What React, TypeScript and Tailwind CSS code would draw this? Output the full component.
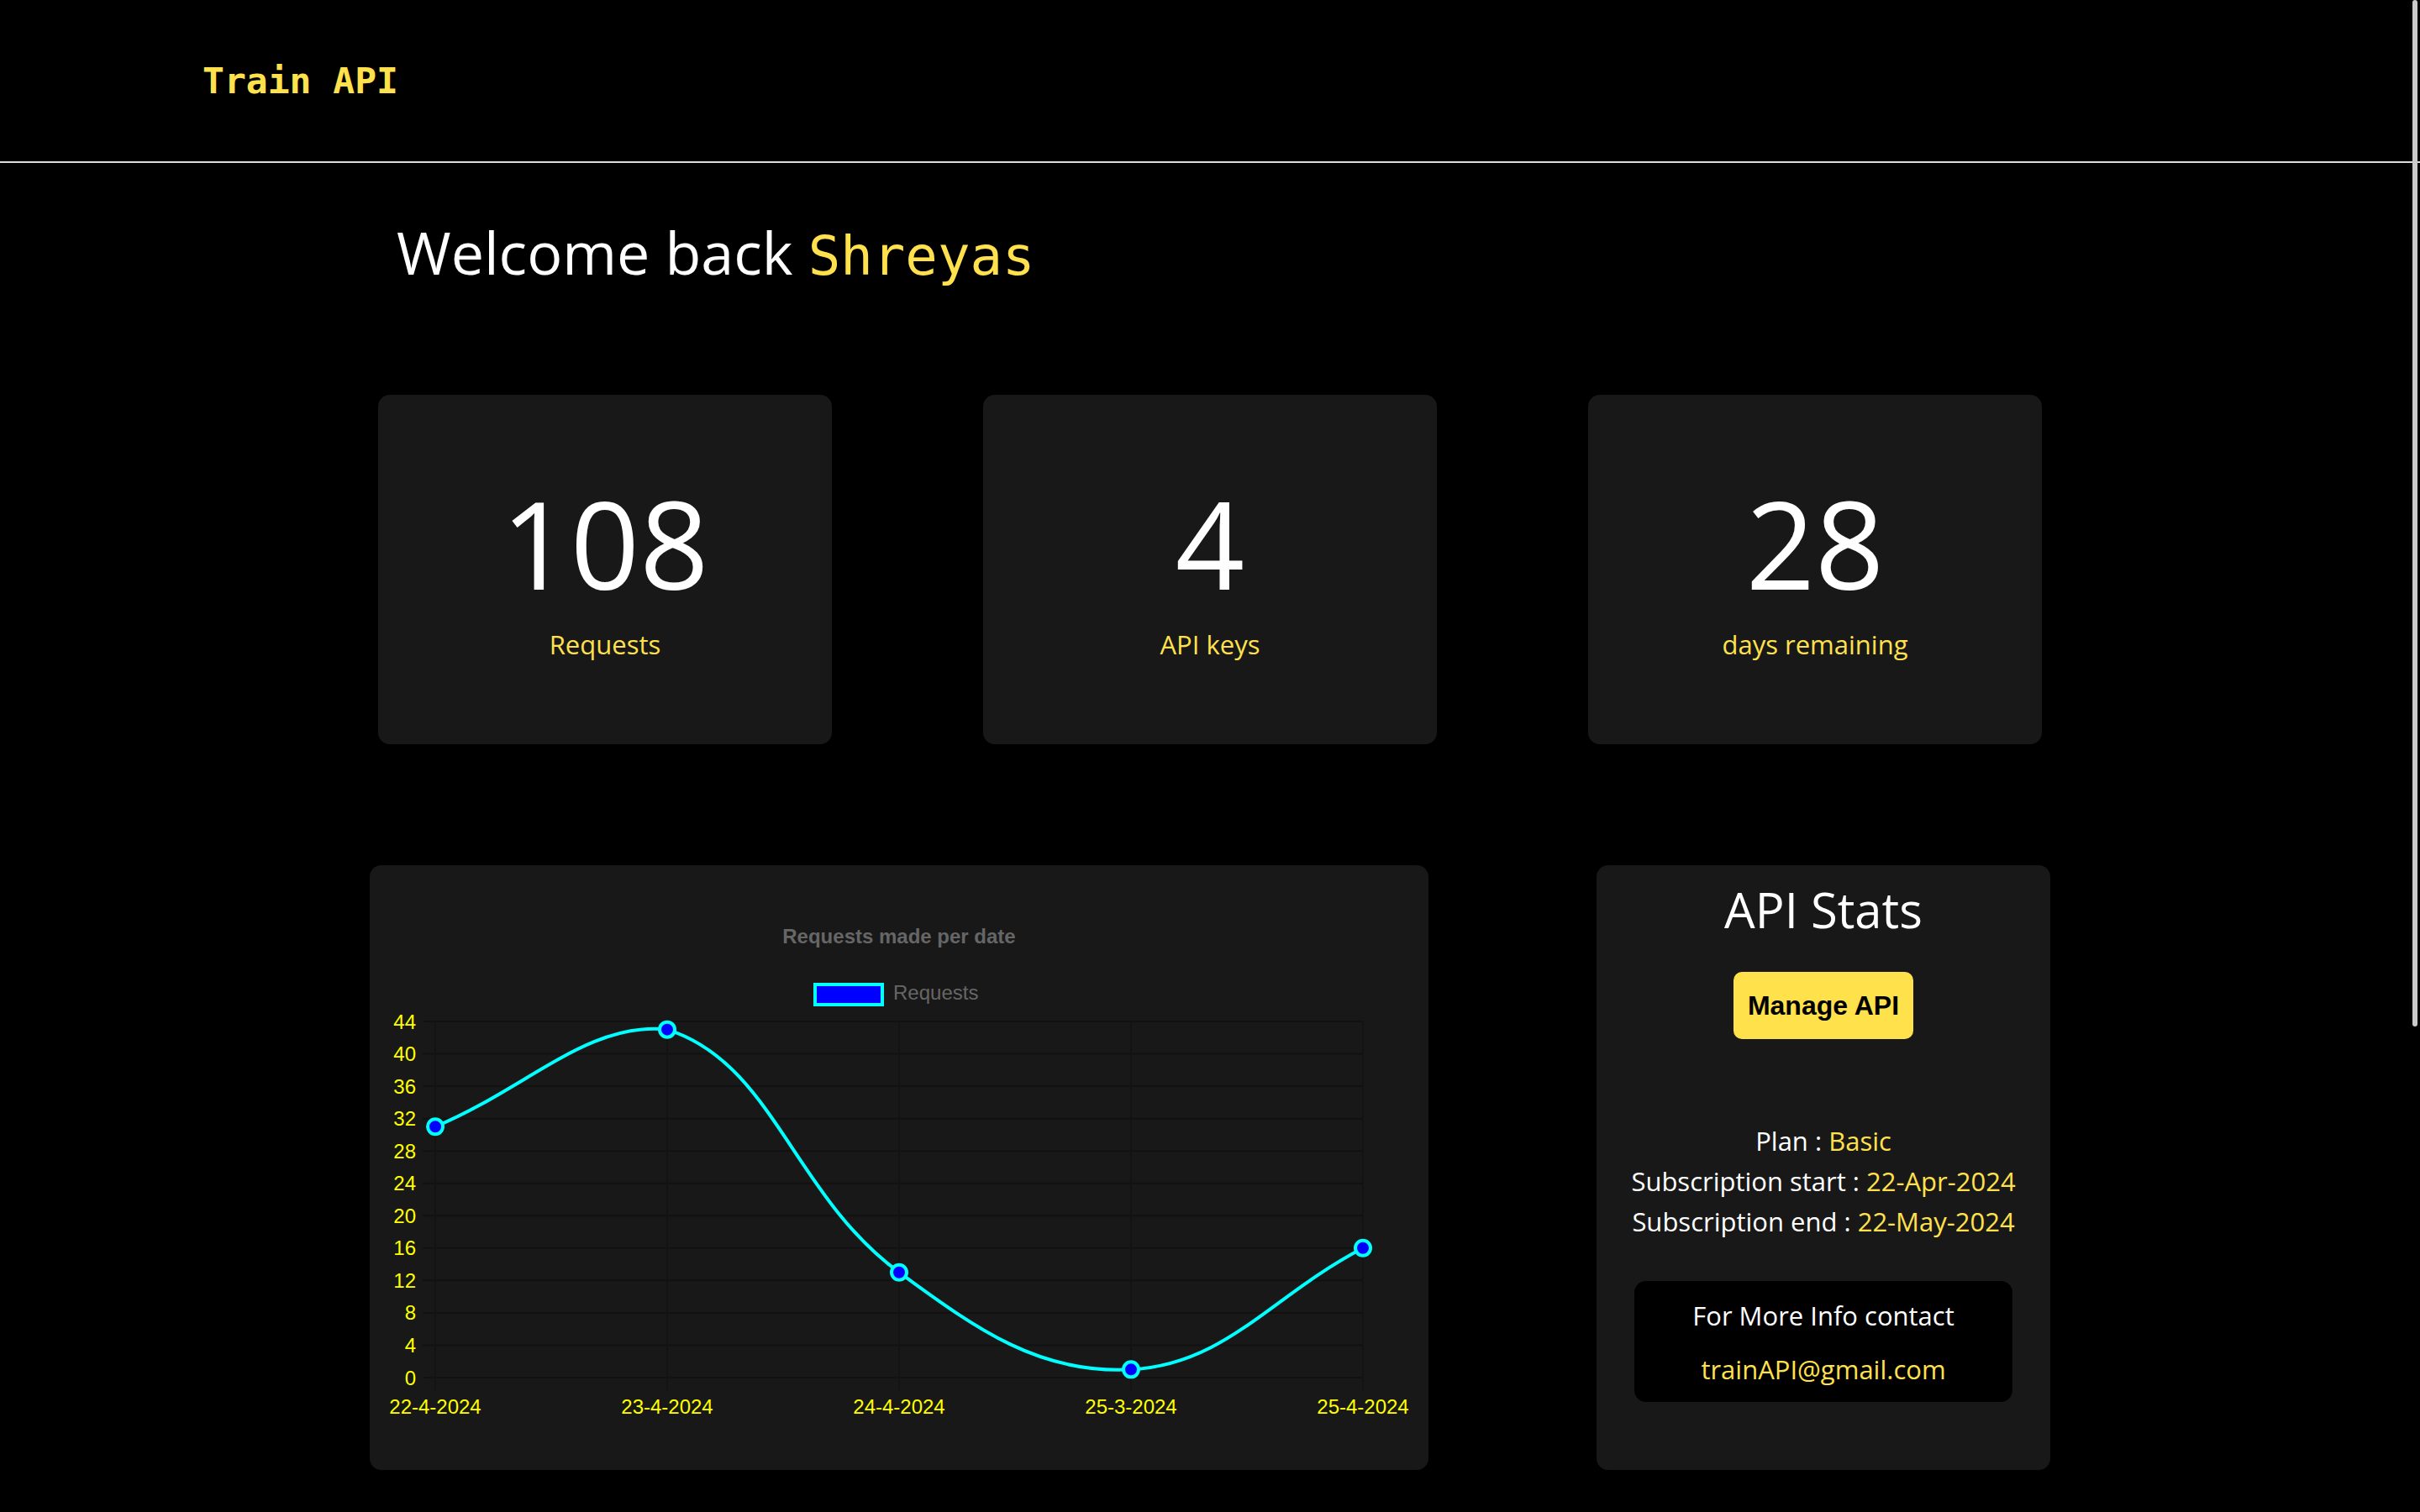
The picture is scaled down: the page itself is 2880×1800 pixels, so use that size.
import React from "react";

const yellow = "text-[#ffe14d]";

const stats = [
  { value: "108", label: "Requests" },
  { value: "4", label: "API keys" },
  { value: "28", label: "days remaining" },
];

const chartData = [
  { label: "22-4-2024", value: 31 },
  { label: "23-4-2024", value: 43 },
  { label: "24-4-2024", value: 13 },
  { label: "25-3-2024", value: 1 },
  { label: "25-4-2024", value: 16 },
];

const X0 = 78;
const STEP = 276;
const Y0 = 610;
const TOP = 186;
const PER = (Y0 - TOP) / 44;

type Pt = { x: number; y: number };

const buildPath = (pts: Pt[]) => {
  const t = 0.4;
  const clamp = (v: number) => Math.min(Y0, Math.max(TOP, v));
  const cps = pts.map((cur, i) => {
    const prev = pts[i - 1] ?? cur;
    const next = pts[i + 1] ?? cur;
    const d01 = Math.hypot(cur.x - prev.x, cur.y - prev.y);
    const d12 = Math.hypot(next.x - cur.x, next.y - cur.y);
    const s01 = d01 / (d01 + d12) || 0;
    const s12 = d12 / (d01 + d12) || 0;
    const fa = t * s01;
    const fb = t * s12;
    return {
      before: { x: cur.x - fa * (next.x - prev.x), y: clamp(cur.y - fa * (next.y - prev.y)) },
      after: { x: cur.x + fb * (next.x - prev.x), y: clamp(cur.y + fb * (next.y - prev.y)) },
    };
  });
  let d = `M ${pts[0].x} ${pts[0].y}`;
  for (let i = 0; i < pts.length - 1; i++) {
    const a = cps[i].after;
    const b = cps[i + 1].before;
    const p = pts[i + 1];
    d += ` C ${a.x} ${a.y} ${b.x} ${b.y} ${p.x} ${p.y}`;
  }
  return d;
};

const RequestsChart = () => {
  const pts = chartData.map((d, i) => ({ x: X0 + STEP * i, y: Y0 - d.value * PER }));
  const ticks = Array.from({ length: 12 }, (_, i) => i * 4);
  return (
    <svg viewBox="0 0 1260 720" className="w-full h-full font-['Liberation_Sans',Arial,sans-serif]">
      <text x="630" y="93" textAnchor="middle" fontSize="24" fontWeight="700" fill="#666666">
        Requests made per date
      </text>
      <rect x="530" y="142" width="80" height="24" fill="#0000ff" stroke="#00ffff" strokeWidth="4" />
      <text x="623" y="160" fontSize="24" fill="#666666">
        Requests
      </text>

      {ticks.map((v) => (
        <line key={v} x1="63" x2={X0 + STEP * 4} y1={Y0 - v * PER} y2={Y0 - v * PER} stroke="#111111" strokeWidth="2" />
      ))}
      {pts.map((p, i) => (
        <line key={i} x1={p.x} x2={p.x} y1={TOP} y2={Y0 + 15} stroke="#131313" strokeWidth="2" />
      ))}

      {ticks.map((v) => (
        <text key={v} x="55" y={Y0 - v * PER + 8.5} textAnchor="end" fontSize="24" fill="#ffff00">
          {v}
        </text>
      ))}
      {chartData.map((d, i) => (
        <text key={d.label} x={X0 + STEP * i} y="653" textAnchor="middle" fontSize="24" fill="#ffff00">
          {d.label}
        </text>
      ))}

      <path d={buildPath(pts)} fill="none" stroke="#00ffff" strokeWidth="4" />
      {pts.map((p, i) => (
        <circle key={i} cx={p.x} cy={p.y} r="9" fill="#0000ff" stroke="#00ffff" strokeWidth="4" />
      ))}
    </svg>
  );
};

export default function App() {
  return (
    <div className="relative w-full h-[1800px] overflow-hidden bg-black text-white font-['Open_Sans',sans-serif]">
      <header className="h-[194px] flex items-center pl-[241px] border-b-2 border-[#dddddd]">
        <span className={`font-['DejaVu_Sans_Mono',monospace] font-bold text-[43px] leading-none ${yellow}`}>
          Train API
        </span>
      </header>

      <h1 className="pl-[472px] mt-[71px] text-[70px] leading-none whitespace-nowrap">
        Welcome back{" "}
        <span className={`font-['DejaVu_Sans_Mono',monospace] text-[64px] leading-none ${yellow}`}>Shreyas</span>
      </h1>

      <div className="w-[1980px] mx-auto mt-[133px] grid grid-cols-3 gap-[180px]">
        {stats.map((s) => (
          <div
            key={s.label}
            className="h-[416px] rounded-[14px] bg-[#181818] flex flex-col items-center justify-center gap-[34px]"
          >
            <div className="text-[144px] leading-none">{s.value}</div>
            <div className={`text-[31px] leading-none ${yellow}`}>{s.label}</div>
          </div>
        ))}
      </div>

      <div className="w-[2000px] mx-auto mt-[144px] flex gap-[200px]">
        <div className="w-[1260px] h-[720px] rounded-[14px] bg-[#181818]">
          <RequestsChart />
        </div>

        <div className="w-[540px] h-[720px] rounded-[14px] bg-[#181818] flex flex-col items-center pt-[24px]">
          <h2 className="text-[58px] leading-none">API Stats</h2>
          <button className="mt-[45px] px-[17px] py-[24px] rounded-[10px] bg-[#ffe14b] text-black font-['Liberation_Sans',Arial,sans-serif] font-bold text-[32px] leading-[32px]">
            Manage API
          </button>
          <div className="mt-[97px] text-[31px] leading-[48px] text-center whitespace-nowrap">
            <p>
              Plan : <span className={yellow}>Basic</span>
            </p>
            <p>
              Subscription start : <span className={yellow}>22-Apr-2024</span>
            </p>
            <p>
              Subscription end : <span className={yellow}>22-May-2024</span>
            </p>
          </div>
          <div className="mt-[47px] w-[450px] h-[144px] rounded-[14px] bg-black flex flex-col items-center pt-[17px] gap-[16px] text-[31px] leading-[48px]">
            <p>For More Info contact</p>
            <p className={yellow}>trainAPI@gmail.com</p>
          </div>
        </div>
      </div>

      <div className="absolute top-0 right-[3px] w-[6px] h-[1222px] rounded-full bg-[#cbcbcb]" />
    </div>
  );
}
